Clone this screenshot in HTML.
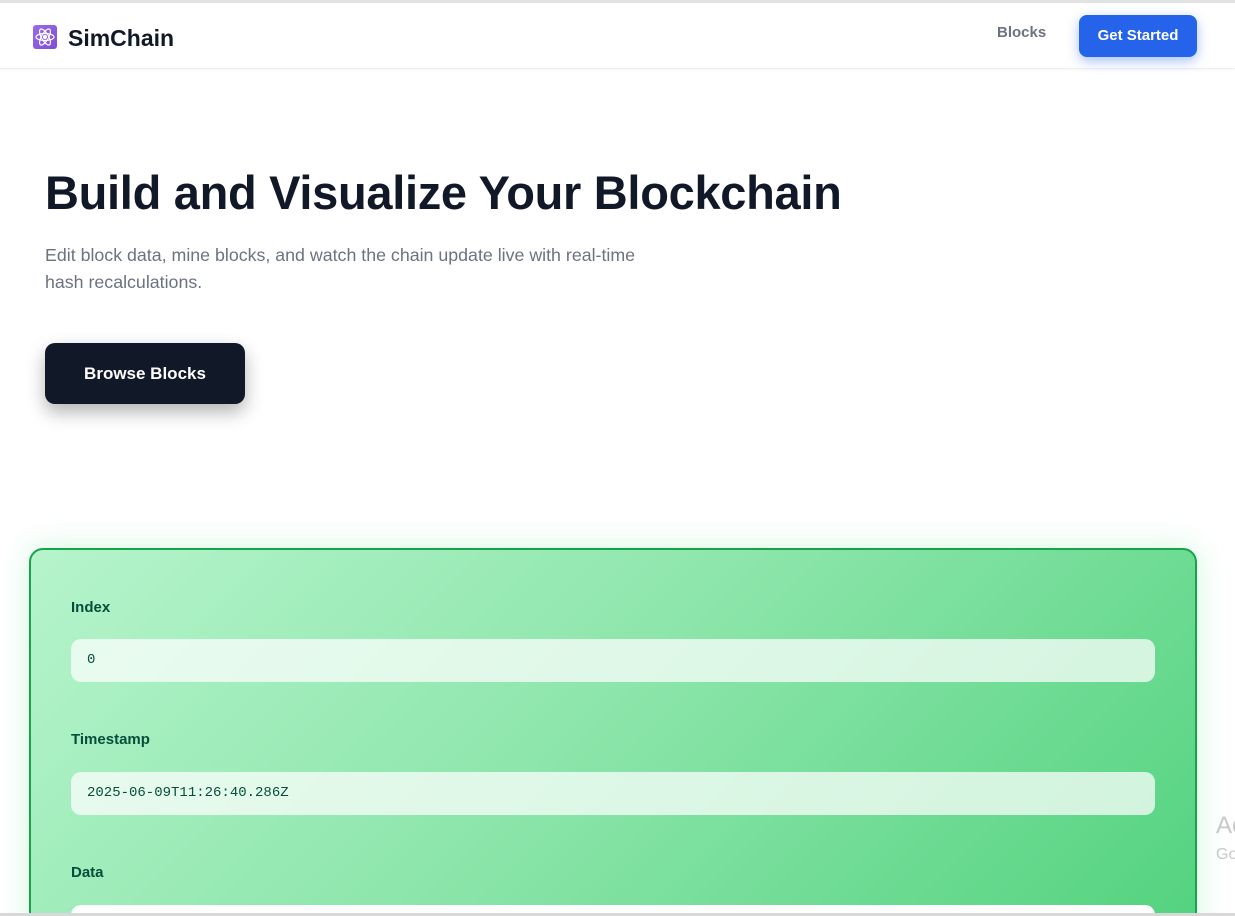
<!DOCTYPE html>
<html style="height:916px;overflow:hidden"><head><meta charset="utf-8"><style>
*{box-sizing:border-box;margin:0;padding:0}
body{width:1235px;height:916px;overflow:hidden;background:#fff;font-family:"Liberation Sans","DejaVu Sans",sans-serif;position:relative}
.top{position:absolute;top:0;left:0;width:1235px;height:3px;background:#e2e2e2;z-index:5}
.nav{position:absolute;top:3px;left:0;width:1235px;height:66px;background:#fff;border-bottom:1px solid #f0f0f0;box-shadow:0 1px 3px rgba(0,0,0,.04)}
.logo{position:absolute;left:33px;top:22px;width:24px;height:24px;background:linear-gradient(135deg,#9a6ce8,#7c4fd6);border-radius:3px}
.brand{position:absolute;left:68px;top:22px;font-size:23px;font-weight:bold;color:#111827}
.blocks{position:absolute;left:997px;top:21px;font-size:15px;font-weight:bold;color:#6b7280}
.gs{position:absolute;left:1079px;top:12px;width:118px;height:42px;background:#2563eb;border-radius:8px;color:#fff;font-weight:bold;font-size:15px;text-align:center;line-height:42px;box-shadow:0 4px 12px rgba(37,99,235,.4)}
h1{position:absolute;left:45px;top:165px;font-size:47px;font-weight:bold;color:#111827;letter-spacing:-.3px;white-space:nowrap}
.sub{position:absolute;left:45px;top:242px;width:700px;font-size:17.8px;line-height:27px;color:#6b7280}
.bb{position:absolute;left:45px;top:343px;width:200px;height:61px;background:#111827;border-radius:10px;color:#fff;font-weight:bold;font-size:17px;text-align:center;line-height:61px;box-shadow:0 8px 18px rgba(0,0,0,.3)}
.card{position:absolute;left:29px;top:548px;width:1168px;height:400px;border:2px solid #16a34a;border-radius:14px;background:linear-gradient(135deg,#b6f4cc 0%,#8ee6ac 45%,#52d27e 100%);box-shadow:0 0 30px rgba(74,222,128,.25)}
.lbl{position:absolute;left:40px;font-size:15px;font-weight:bold;color:#064e3b}
.inp{position:absolute;left:40px;width:1084px;height:43px;border-radius:10px;background:rgba(255,255,255,.72);font-family:"Liberation Mono","DejaVu Sans Mono",monospace;font-size:14px;color:#064e3b;padding-left:16px;line-height:43px}
.wm{position:absolute;left:1216px;color:#c8c8c8}
.bot{position:absolute;left:0;top:913px;width:1235px;height:3px;background:#d8d8d8;z-index:5}
</style></head><body>
<div class="top"></div>
<div class="nav">
<div class="logo"><svg width="24" height="24" viewBox="0 0 24 24" fill="none" stroke="#fff" stroke-width="1.2"><ellipse cx="12" cy="12" rx="9" ry="3.5"/><ellipse cx="12" cy="12" rx="9" ry="3.5" transform="rotate(60 12 12)"/><ellipse cx="12" cy="12" rx="9" ry="3.5" transform="rotate(120 12 12)"/><circle cx="12" cy="12" r="1.5" fill="#fff"/></svg></div>
<div class="brand">SimChain</div>
<div class="blocks">Blocks</div>
<div class="gs">Get Started</div>
</div>
<h1>Build and Visualize Your Blockchain</h1>
<div class="sub">Edit block data, mine blocks, and watch the chain update live with real-time<br>hash recalculations.</div>
<div class="bb">Browse Blocks</div>
<div class="card">
<div class="lbl" style="top:49px">Index</div>
<div class="inp" style="top:89px">0</div>
<div class="lbl" style="top:181px">Timestamp</div>
<div class="inp" style="top:222px">2025-06-09T11:26:40.286Z</div>
<div class="lbl" style="top:314px">Data</div>
<div class="inp" style="top:355px;background:#fff"></div>
</div>
<div class="wm" style="top:812px;font-size:24px">Ac</div>
<div class="wm" style="top:846px;font-size:16px">Go</div>
<div class="bot"></div>
</body></html>
